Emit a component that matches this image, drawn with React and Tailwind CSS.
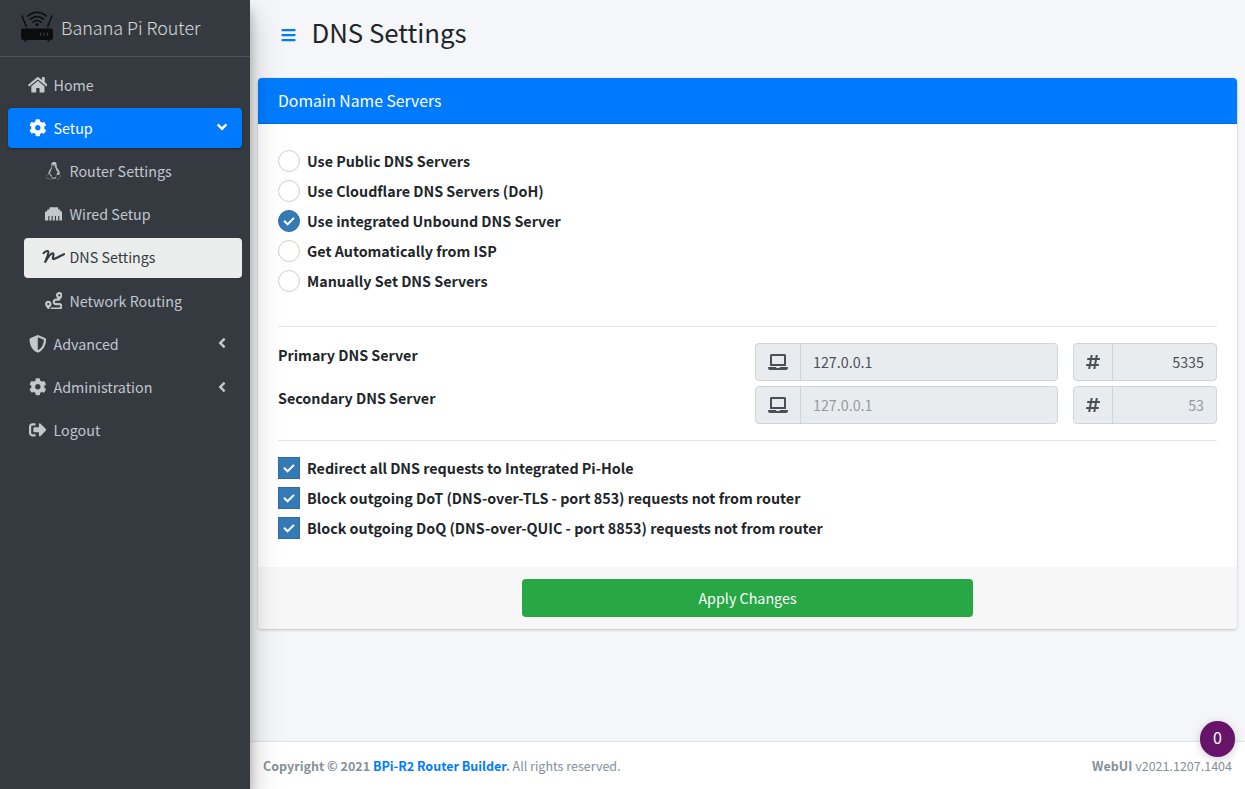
import React from "react";
import { FaHome, FaCog, FaLinux, FaEthernet, FaRoute, FaShieldAlt, FaSignOutAlt, FaAngleLeft, FaAngleDown, FaLaptop, FaHashtag, FaBars } from "react-icons/fa";

function RouterLogo() {
  return (
    <svg viewBox="0 0 33 32" className="mb-[3px] h-8 w-[33px] shrink-0" fill="none" stroke="#0b0c0e" strokeLinecap="round">
      <rect x="1" y="17.5" width="32" height="11.5" rx="2.5" fill="#0b0c0e" stroke="none" />
      <path d="M5.5 28.5v2M28.5 28.5v2" strokeWidth="2" strokeLinecap="butt" />
      <path d="M2 5L6.3 15.5M32 5L27.7 15.5" strokeWidth="1.5" />
      <path d="M7.7 5Q17 -2.6 26.3 5M10.4 8.2Q17 2.8 23.6 8.2M13.1 11.2Q17 8 20.9 11.2" strokeWidth="1.5" />
      <circle cx="17" cy="13.4" r="1.5" fill="#0b0c0e" stroke="none" />
      <path d="M20.5 21.5v3.5M24 21.5v3.5M27.5 21.5v3.5" stroke="#343a40" strokeWidth="1.2" strokeLinecap="butt" />
    </svg>
  );
}

function WaveIcon() {
  return (
    <svg viewBox="0 0 24 16" className="h-4 w-6 shrink-0" fill="none" stroke="currentColor" strokeWidth="2.1" strokeLinecap="round" strokeLinejoin="round">
      <path d="M1.6 4.2C3 2.4 5.6 1.4 6.3 2.6C6.9 4 4.5 9.5 3.2 13C5.5 9 8.5 4.3 10.8 4.2C12.8 4.3 9.8 9.7 11.2 10C13.5 10.2 17.5 7 22 5.2" />
    </svg>
  );
}

function NavItem({ icon, label, arrow, sub, state }) {
  const look =
    state === "open"
      ? "bg-[#007bff] text-white shadow-[0_1px_3px_rgba(0,0,0,0.12),0_1px_2px_rgba(0,0,0,0.24)]"
      : state === "current"
        ? "bg-[#ebedec] text-[#343a40]"
        : "text-[#c2c7d0]";
  return (
    <li className={sub ? "mb-[3.2px] pl-4" : "mb-[3.2px]"}>
      <a className={"flex h-10 items-center rounded-[4px] pr-[14px] pb-[0.8px] pl-4 " + look}>
        <span className="mr-[2.5px] flex w-[27px] shrink-0 items-center justify-center">{icon}</span>
        <span className="flex-1 whitespace-nowrap">{label}</span>
        {arrow}
      </a>
    </li>
  );
}

function Mark({ round, checked, label }) {
  return (
    <label className="mb-2 flex h-[22px] items-center gap-[7px] font-bold">
      <span
        className={
          "flex h-[22px] w-[22px] shrink-0 items-center justify-center border " +
          (round ? "rounded-full " : "") +
          (checked ? "border-[#2e6da4] bg-[#337ab7]" : "border-[#d3cfc8] bg-white")
        }
      >
        {checked && (
          <svg viewBox="0 0 22 22" className="h-[22px] w-[22px] shrink-0" fill="none" stroke="white" strokeWidth="2">
            <path d="M6 10.8L9.6 14.3L16 7.9" />
          </svg>
        )}
      </span>
      <span className="whitespace-nowrap">{label}</span>
    </label>
  );
}

function ServerRow({ label, ip, port, muted }) {
  const value = muted ? "text-[#939ba2]" : "text-[#495057]";
  const box = "flex h-[38px] overflow-hidden rounded-[4px] border border-[#ced4da] bg-[#e9ecef] text-[#495057]";
  return (
    <div className="mb-[5px] flex h-[38px]">
      <div className="flex-1 font-bold leading-6">{label}</div>
      <div className={box + " mr-[15px] w-[303px]"}>
        <span className="flex w-[45px] items-center justify-center border-r border-[#ced4da]">
          <FaLaptop className="h-4 w-5" />
        </span>
        <span className={"flex flex-1 items-center px-3 " + value}>{ip}</span>
      </div>
      <div className={box + " w-[144px]"}>
        <span className="flex w-[39px] items-center justify-center border-r border-[#ced4da]">
          <FaHashtag className="h-4 w-[14px]" />
        </span>
        <span className={"flex flex-1 items-center justify-end px-3 " + value}>{port}</span>
      </div>
    </div>
  );
}

export default function App() {
  const square = "h-[17.6px] w-[17.6px] shrink-0";
  return (
    <div className="flex h-[789px] w-[1245px] overflow-hidden bg-[#f4f6f9] font-['Noto_Sans_CJK_SC',sans-serif] text-[14.31px] leading-6 text-[#212529]">
      <aside className="z-10 w-[250px] shrink-0 bg-[#343a40] shadow-[0_14px_28px_rgba(0,0,0,0.25),0_10px_10px_rgba(0,0,0,0.22)]">
        <div className="flex h-[57px] items-center border-b border-[#4b545c] pl-5">
          <RouterLogo />
          <span className="mb-[2px] ml-2 text-[17.9px] font-light text-white/80">Banana Pi Router</span>
        </div>
        <ul className="px-2 pt-2">
          <NavItem icon={<FaHome className="h-[17.6px] w-[19.8px] shrink-0" />} label="Home" />
          <NavItem icon={<FaCog className={square} />} label="Setup" state="open" arrow={<FaAngleDown className="mb-[1px] h-4 w-3" />} />
          <NavItem sub icon={<FaLinux className="h-[17.6px] w-[15.4px] shrink-0" />} label="Router Settings" />
          <NavItem sub icon={<FaEthernet className={square} />} label="Wired Setup" />
          <NavItem sub icon={<WaveIcon />} label="DNS Settings" state="current" />
          <NavItem sub icon={<FaRoute className={square} />} label="Network Routing" />
          <NavItem icon={<FaShieldAlt className={square} />} label="Advanced" arrow={<FaAngleLeft className="mb-[1px] h-4 w-3" />} />
          <NavItem icon={<FaCog className={square} />} label="Administration" arrow={<FaAngleLeft className="h-4 w-3" />} />
          <NavItem icon={<FaSignOutAlt className={square} />} label="Logout" />
        </ul>
      </aside>

      <div className="flex min-w-0 flex-1 flex-col">
        <header className="flex h-[78px] items-start pt-[15px] pl-[31px]">
          <FaBars className="mt-3 h-4 w-[15px] text-[#007bff]" />
          <h1 className="ml-[15.4px] text-[25.8px] leading-[34px]">DNS Settings</h1>
        </header>

        <main className="flex-1 px-2">
          <section className="overflow-hidden rounded-[4px] bg-white shadow-[0_0_1px_rgba(0,0,0,0.125),0_1px_3px_rgba(0,0,0,0.2)]">
            <h2 className="flex h-[46px] items-center border-b border-black/15 bg-[#007bff] px-5 text-[15.76px] text-white">
              Domain Name Servers
            </h2>
            <div className="px-5 pt-[26px]">
              <Mark round label="Use Public DNS Servers" />
              <Mark round label="Use Cloudflare DNS Servers (DoH)" />
              <Mark round checked label="Use integrated Unbound DNS Server" />
              <Mark round label="Get Automatically from ISP" />
              <Mark round label="Manually Set DNS Servers" />
              <hr className="mt-[34px] mb-4 border-black/10" />
              <ServerRow label="Primary DNS Server" ip="127.0.0.1" port="5335" />
              <ServerRow label="Secondary DNS Server" ip="127.0.0.1" port="53" muted />
              <hr className="mt-4 mb-4 border-black/10" />
              <Mark checked label="Redirect all DNS requests to Integrated Pi-Hole" />
              <Mark checked label="Block outgoing DoT (DNS-over-TLS - port 853) requests not from router" />
              <Mark checked label="Block outgoing DoQ (DNS-over-QUIC - port 8853) requests not from router" />
            </div>
            <div className="mt-7 flex h-[62px] items-center justify-center bg-[#f7f7f7]">
              <button className="h-[38px] w-[451px] rounded-[4px] bg-[#28a745] text-white">Apply Changes</button>
            </div>
          </section>
        </main>

        <footer className="relative flex h-[48px] items-center justify-between border-t border-[#dee2e6] bg-white px-[13px] text-[12.53px] text-[#869099]">
          <span>
            <b>Copyright © 2021 <span className="text-[#007bff]">BPi-R2 Router Builder</span>.</b> All rights reserved.
          </span>
          <span><b>WebUI</b> v2021.1207.1404</span>
          <span className="absolute -top-[21px] right-[10px] flex h-9 w-[35px] items-center justify-center rounded-full bg-[#661369] pb-1 text-[16px] text-white shadow-[0_2px_8px_rgba(0,0,0,0.2)]">0</span>
        </footer>
      </div>
    </div>
  );
}
